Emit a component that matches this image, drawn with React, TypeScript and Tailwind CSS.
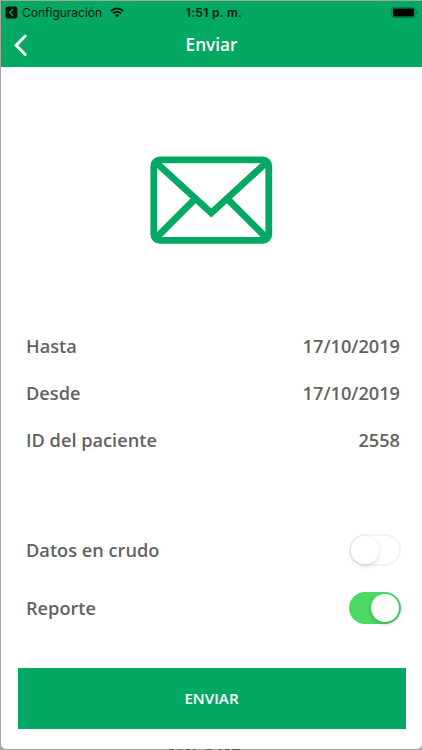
import { useState } from "react";

interface SwitchProps {
	checked: boolean;
	label: string;
	onChange: () => void;
}

const details = [
	{ label: "Hasta", value: "17/10/2019" },
	{ label: "Desde", value: "17/10/2019" },
	{ label: "ID del paciente", value: "2558" },
];

const StatusBar = () => {
	return (
		<div className="grid h-[22px] grid-cols-3 items-center pl-[4px] pr-[4px] pt-px font-['Inter',sans-serif] text-[#04170d]">
			<div className="flex items-center">
				<svg width="13" height="13" viewBox="0 0 13 13">
					<rect x="0.4" y="0.4" width="12" height="12" rx="2.6" fill="#04170d" />
					<path
						d="M7.9 3.1 4.6 6.4l3.3 3.3"
						fill="none"
						stroke="#03a963"
						strokeWidth="1.3"
					/>
				</svg>
				<span className="ml-[4px] whitespace-nowrap text-[12px] font-normal leading-[14px]">
					Configuración
				</span>
				<svg
					className="ml-[8px] shrink-0"
					width="14"
					height="11"
					viewBox="0 0 14 11"
					fill="none"
					stroke="#04170d"
					strokeWidth="1.9"
				>
					<path d="M0.8 4.1a8.8 8.8 0 0 1 12.4 0" />
					<path d="M3 6.5a5.7 5.7 0 0 1 8 0" />
					<path d="M7 10.6 4.9 8.4a3 3 0 0 1 4.2 0Z" fill="#04170d" stroke="none" />
				</svg>
			</div>
			<span className="whitespace-nowrap pl-[5px] text-center text-[12px] font-semibold leading-[14px] tracking-[0.3px]">
				1:51 p. m.
			</span>
			<svg
				className="justify-self-end"
				width="27"
				height="12"
				viewBox="0 0 27 12"
			>
				<rect
					x="0.8"
					y="0.3"
					width="23.4"
					height="10.4"
					rx="2.8"
					fill="none"
					stroke="#04713f"
					strokeWidth="1"
				/>
				<rect x="2" y="1.5" width="21" height="8" rx="1.3" fill="#000" />
				<path d="M25.3 3.7v3.6q1.4-.5 1.4-1.8t-1.4-1.8Z" fill="#04713f" />
			</svg>
		</div>
	);
};

const Envelope = () => {
	return (
		<svg
			width="123"
			height="88"
			viewBox="0 0 123 88"
			fill="none"
			stroke="#03a963"
			strokeWidth="6.8"
		>
			<rect x="3.8" y="3.9" width="115" height="80.4" rx="6" />
			<path d="M5.5 6 61.3 57l55.5-51" />
			<path d="M5.5 82.5 43.5 44.5M117 82.5l-38-38" />
		</svg>
	);
};

const Switch = ({ checked, label, onChange }: SwitchProps) => {
	return (
		<button
			type="button"
			role="switch"
			aria-checked={checked}
			aria-label={label}
			onClick={onChange}
			className={`flex h-[32px] w-[52px] items-center rounded-full border-2 ${
				checked
					? "justify-end border-[#4cd964] bg-[#4cd964]"
					: "justify-start border-[#f3f3f3] bg-white"
			}`}
		>
			<span
				className={`size-[28px] rounded-full bg-white ${
					checked
						? "shadow-[0_2px_4px_rgba(0,0,0,0.22)]"
						: "shadow-[0_2px_5px_rgba(0,0,0,0.14)]"
				}`}
			/>
		</button>
	);
};

const App = () => {
	const [raw, setRaw] = useState(false);
	const [report, setReport] = useState(true);

	return (
		<div className="h-[750px] w-[422px] overflow-hidden bg-[#a6a6a6] pl-px pt-px font-['Open_Sans',sans-serif] font-semibold text-[#636363]">
			<div className="flex h-[748px] flex-col overflow-hidden rounded-b-[5px] bg-white">
				<header className="h-[66px] shrink-0 bg-[#03a963]">
					<StatusBar />
					<div className="grid h-[42px] grid-cols-3 items-center text-white">
						<button type="button" aria-label="Atrás" className="pl-[12px] pt-px">
							<svg
								width="15"
								height="24"
								viewBox="0 0 15 24"
								fill="none"
								stroke="currentColor"
								strokeWidth="3"
								strokeLinecap="round"
							>
								<path d="M12.2 3 3.2 12.3 12.2 21.5" />
							</svg>
						</button>
						<h1 className="pt-px text-center text-[17.2px] leading-6">
							Enviar
						</h1>
					</div>
				</header>
				<div className="mt-[89px] flex h-[88px] shrink-0 justify-center">
					<Envelope />
				</div>
				<dl className="mt-[78px] pl-[25px] pr-[22px] text-[18.2px] leading-6">
					{details.map((item) => (
						<div
							key={item.label}
							className="flex h-[47px] items-center justify-between"
						>
							<dt>{item.label}</dt>
							<dd>{item.value}</dd>
						</div>
					))}
				</dl>
				<div className="mt-[58px] pl-[25px] pr-[21px] text-[18.2px] leading-6">
					<div className="flex h-[58px] items-center justify-between">
						<span>Datos en crudo</span>
						<Switch
							label="Datos en crudo"
							checked={raw}
							onChange={() => setRaw(!raw)}
						/>
					</div>
					<div className="flex h-[58px] items-center justify-between">
						<span>Reporte</span>
						<Switch
							label="Reporte"
							checked={report}
							onChange={() => setReport(!report)}
						/>
					</div>
				</div>
				<button
					type="button"
					className="ml-[16.5px] mr-[16.5px] mt-[30.5px] h-[61px] shrink-0 bg-[#03a963] text-[15.2px] text-white"
				>
					ENVIAR
				</button>
			</div>
			{/* edge of the content behind the sheet */}
			<div className="flex h-px justify-center gap-[3px] pr-[14px]">
				<span className="w-[5px] bg-[#555]" />
				<span className="w-[6px] bg-[#777]" />
				<span className="w-[4px] bg-[#555]" />
				<span className="w-[3px] bg-[#666]" />
				<span className="ml-[7px] w-[6px] bg-[#666]" />
				<span className="ml-[4px] w-[3px] bg-[#666]" />
				<span className="w-[4px] bg-[#555]" />
				<span className="w-[8px] bg-[#555]" />
			</div>
		</div>
	);
};
export default App;
